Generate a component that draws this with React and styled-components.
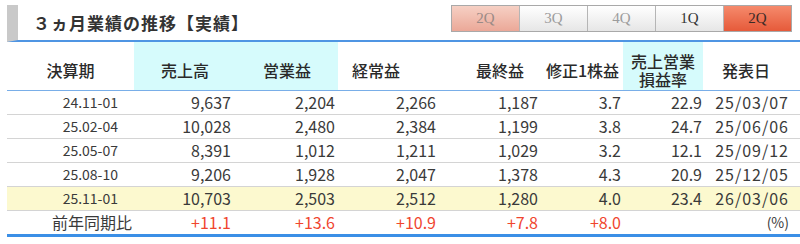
import React from "react";
import styled, { createGlobalStyle, css } from "styled-components";

const GlobalStyle = createGlobalStyle`
  body {
    margin: 0;
    background: #fff;
    overflow: hidden;
    font-family: "Noto Sans CJK JP", "Noto Sans", sans-serif;
  }
`;

const Wrap = styled.div`
  width: 793px;
  padding: 5px 0 0 7px;
`;

const TitleBar = styled.div`
  height: 35px;
  display: flex;
  justify-content: space-between;
  align-items: center;
  border-left: 11px solid #c9c9c9;
  border-bottom: 2px solid #4f95e3;
  padding-left: 15px;
`;

const Title = styled.h2`
  margin: 0;
  font-size: 17px;
  font-weight: 700;
  color: #333;
  letter-spacing: 1px;
`;

const Tabs = styled.div`
  align-self: flex-start;
  display: flex;
  gap: 1px;
  margin-right: 8px;
  border: 1px solid #a9a9a9;
  background: #b5b5b5;
`;

const tabLooks = {
  prev: css`
    background: linear-gradient(#f6d0c4, #eba898);
    color: #9a8a86;
  `,
  idle: css`
    background: linear-gradient(#ffffff, #e6e6e6);
    color: #9c9c9c;
  `,
  now: css`
    background: linear-gradient(#ffffff, #e6e6e6);
    color: #333;
  `,
  active: css`
    background: linear-gradient(#f58a6c, #e65a3a);
    color: #3a2a26;
  `,
};

const Tab = styled.div`
  width: 67px;
  height: 25px;
  display: flex;
  align-items: center;
  justify-content: center;
  font-family: "Liberation Serif", serif;
  font-size: 15px;
  ${(p) => tabLooks[p.$look]}
`;

const Table = styled.table`
  width: 793px;
  table-layout: fixed;
  border-collapse: separate;
  border-spacing: 0;
`;

const Th = styled.th`
  height: 40px;
  padding: 8px ${(p) => p.$pr || 0}px 0 ${(p) => p.$pl || 0}px;
  border-bottom: 1px solid #79aee8;
  background: ${(p) => (p.$cyan ? "#d6fbfc" : "#fff")};
  font-size: 16px;
  font-weight: 500;
  line-height: 18px;
  color: #2a2a2a;
  text-align: center;
  vertical-align: middle;
`;

const HeadLine = styled.span`
  display: block;
  height: 18px;
  line-height: 18px;
`;

const Row = styled.tr`
  background: ${(p) => (p.$hl ? "#fcf9cf" : "#fff")};
`;

const Td = styled.td`
  height: 23px;
  padding: 0 ${(p) => p.$pr}px 0 0;
  border-bottom: ${(p) => (p.$last ? "3px solid #3b8fe6" : "1px solid #d4d4d4")};
  font-size: ${(p) => (p.$small ? 14 : 16)}px;
  letter-spacing: ${(p) => (p.$wide ? 1 : 0)}px;
  color: ${(p) => (p.$red ? "#f0452e" : "#3a3a3a")};
  text-align: right;
  white-space: nowrap;
  line-height: 23px;
`;

const cols = [
  { label: "決算期", w: 127, pr: 16 },
  { label: "売上高", w: 102, pr: 5, cyan: true },
  { label: "営業益", w: 102, pr: 3, cyan: true },
  { label: "経常益", w: 102, pr: 4, hpr: 26 },
  { label: "最終益", w: 102, pr: 4, hpl: 18 },
  { label: "修正1株益", w: 81, pr: 2 },
  { label: ["売上営業", "損益率"], w: 80, pr: 1, cyan: true },
  { label: "発表日", w: 97, pr: 11, hpr: 11 },
];

const rows = [
  ["24.11-01", "9,637", "2,204", "2,266", "1,187", "3.7", "22.9", "25/03/07"],
  ["25.02-04", "10,028", "2,480", "2,384", "1,199", "3.8", "24.7", "25/06/06"],
  ["25.05-07", "8,391", "1,012", "1,211", "1,029", "3.2", "12.1", "25/09/12"],
  ["25.08-10", "9,206", "1,928", "2,047", "1,378", "4.3", "20.9", "25/12/05"],
  ["25.11-01", "10,703", "2,503", "2,512", "1,280", "4.0", "23.4", "26/03/06"],
];

const yoy = ["前年同期比", "+11.1", "+13.6", "+10.9", "+7.8", "+8.0", "", "(%)"];

export default function App() {
  return (
    <Wrap>
      <GlobalStyle />
      <TitleBar>
        <Title>３ヵ月業績の推移【実績】</Title>
        <Tabs>
          <Tab $look="prev">2Q</Tab>
          <Tab $look="idle">3Q</Tab>
          <Tab $look="idle">4Q</Tab>
          <Tab $look="now">1Q</Tab>
          <Tab $look="active">2Q</Tab>
        </Tabs>
      </TitleBar>
      <Table>
        <colgroup>
          {cols.map((c, i) => (
            <col key={i} style={{ width: c.w }} />
          ))}
        </colgroup>
        <thead>
          <tr>
            {cols.map((c, i) => (
              <Th key={i} $cyan={c.cyan} $pr={c.hpr} $pl={c.hpl}>
                {Array.isArray(c.label)
                  ? c.label.map((t) => <HeadLine key={t}>{t}</HeadLine>)
                  : c.label}
              </Th>
            ))}
          </tr>
        </thead>
        <tbody>
          {rows.map((r, ri) => (
            <Row key={ri} $hl={ri === rows.length - 1}>
              {r.map((v, i) => (
                <Td key={i} $pr={cols[i].pr} $small={i === 0} $wide={i === 7}>
                  {v}
                </Td>
              ))}
            </Row>
          ))}
          <Row>
            {yoy.map((v, i) => (
              <Td
                key={i}
                $last
                $pr={i === 0 ? 2 : cols[i].pr}
                $red={i > 0 && i < 7}
                $small={i === 7}
              >
                {v}
              </Td>
            ))}
          </Row>
        </tbody>
      </Table>
    </Wrap>
  );
}
